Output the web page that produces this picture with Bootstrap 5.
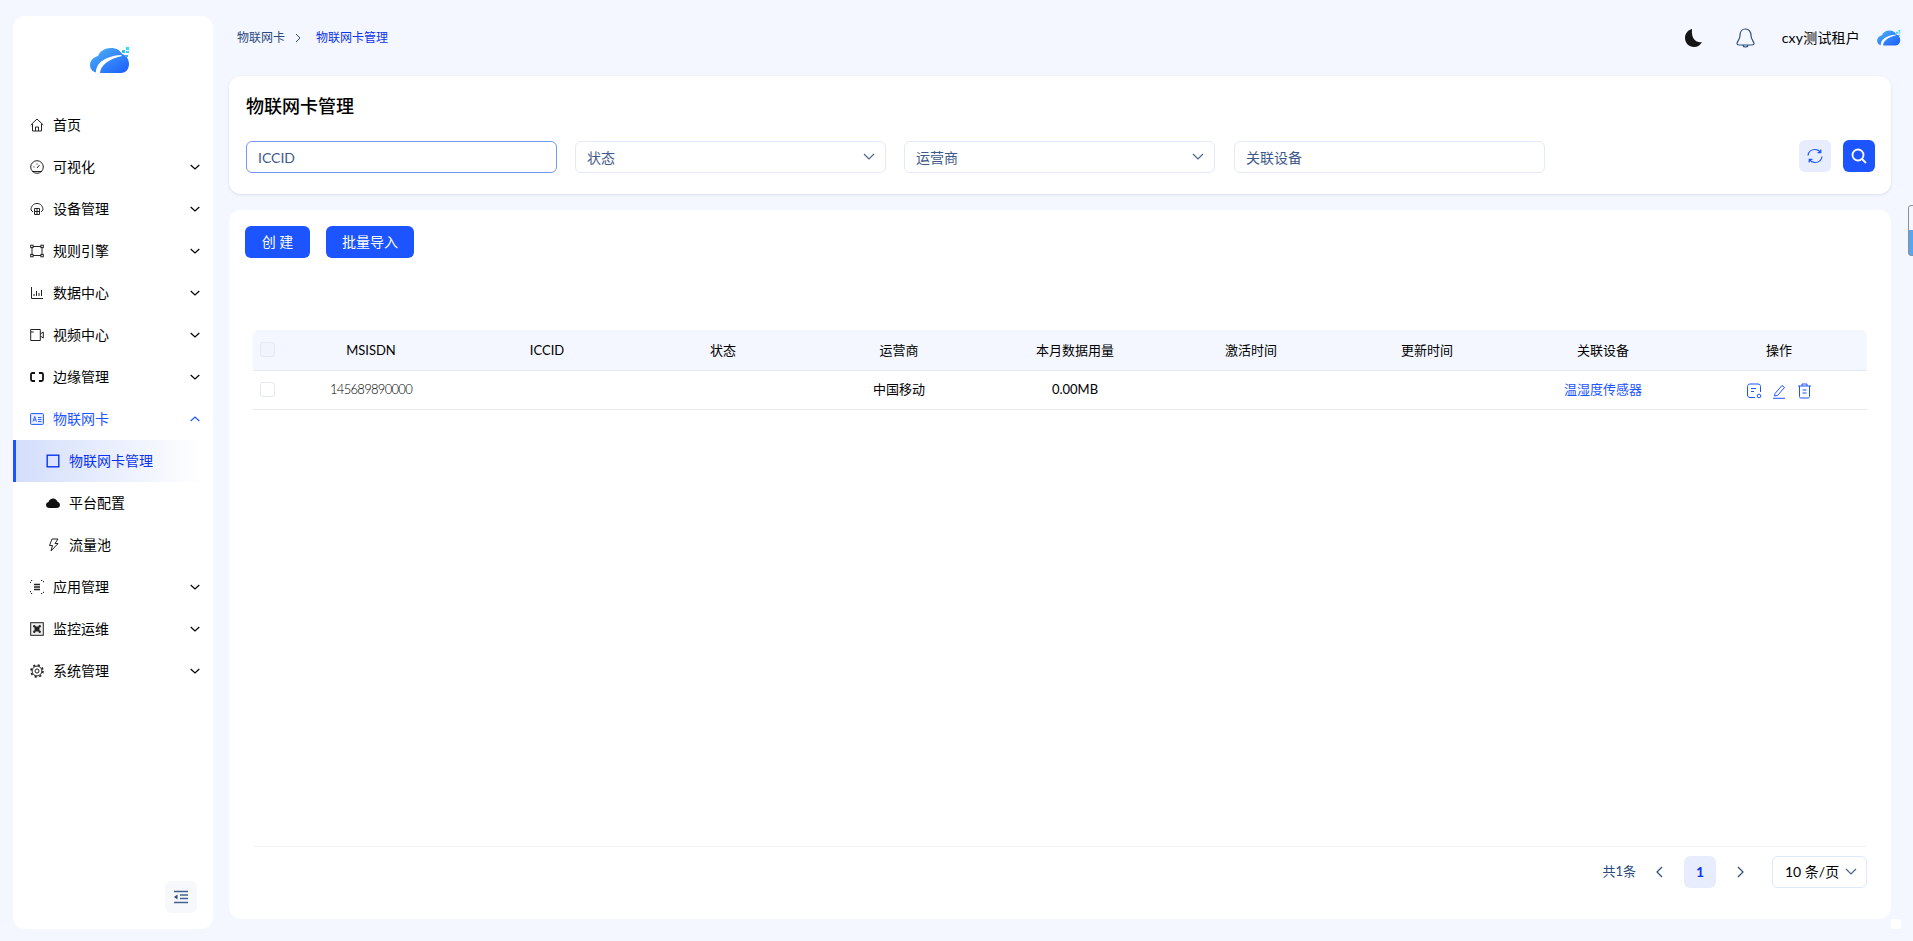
<!DOCTYPE html>
<html lang="zh-CN">
<head>
<meta charset="utf-8">
<title>物联网卡管理</title>
<link href="https://cdn.jsdelivr.net/npm/bootstrap@5.3.0/dist/css/bootstrap.min.css" rel="stylesheet">
<style>
html,body{height:100%;overflow:hidden}
body{background:#f4f7ff;font-family:"Lato","Noto Sans CJK SC",sans-serif;font-size:14px;color:#000;line-height:1.4}
.shell{height:941px}
.sidebar{width:200px;flex:none;margin:16px 0 12px 13px;background:#fff;border-radius:12px}
.brandbox{height:88px;padding:31px 6px 0 0}
.menu-row{height:42px;padding:0 13px 0 17px;color:#000;text-decoration:none}
.menu-row .ico{width:14px;height:14px;margin-right:9px;flex:none}
.menu-row .chev{width:10px;height:10px;margin-left:auto;flex:none}
.menu-row.open{color:#1c55ff}
.sub-row{height:42px;margin-right:10px;padding-left:30px;border-left:3px solid transparent;color:#000;text-decoration:none}
.sub-row .ico{width:14px;height:14px;margin-right:9px;flex:none}
.sub-row.current{border-left-color:#1c55ff;color:#0a32f0;background:linear-gradient(90deg,#d3defc,#fff)}
.collapse-btn{width:32px;height:32px;background:#f6f8fc;border-radius:6px;margin:0 16px 16px 0}
.content{margin:0 22px 22px 16px;min-width:0}
.topline{height:76px;padding:0 0 0 8px}
.crumb{font-size:12px;color:#2b4a7e}
.crumb .now{color:#0a32f0}
.crumb svg{width:8px;height:10px;margin:0 14px 0 9px}
.top-moon{width:17px;height:18px;margin-right:34px}
.top-bell{width:19px;height:21px;margin-right:27px}
.top-user{margin-right:17px;letter-spacing:.2px}
.top-logo{margin-right:-10px}
.panel{background:#fff;border-radius:12px}
.search-panel{height:118px;padding:18px 16px 0 17px;margin-bottom:16px;box-shadow:0 1px 3px rgba(60,80,130,.14)}
.page-title{font-size:18px;font-weight:500;color:#000;line-height:24px;margin:0 0 23px}
.filter-row{gap:18px}
.filter-row .form-control,.filter-row .form-select{width:311px;height:32px;flex:none;padding:0 11px;font-size:14px;color:#3f5a8a;border:1px solid #e2e9fb;border-radius:6px;box-shadow:none}
.filter-row .form-control::placeholder{color:#3f5a8a;opacity:1}
.filter-row .form-control.hot{border-color:#7596f3}
.filter-row .pick-wrap+.form-control{margin-left:1px}
.form-select,.size-pick{background-image:none}
.pick-wrap{position:relative;flex:none}
.pick-wrap svg{position:absolute;right:11px;top:11px;width:12px;height:10px;pointer-events:none}
.square-btn{width:32px;height:32px;padding:0;border:0;border-radius:6px;display:flex;align-items:center;justify-content:center}
.square-btn.soft{background:#e8edfd}
.square-btn.solid{background:#1c55ff}
.btn-pair{gap:12px;margin-top:-1px}
.list-panel{height:709px;padding:16px 24px 0 24px;position:relative}
.act-btn{height:32px;background:#1c55ff;border:0;border-radius:6px;color:#fff;font-size:14px;padding:0 16px;line-height:32px}
.act-btn.first{width:65px;margin-left:-8px;padding:0}
.data-table{table-layout:fixed;width:1614px;margin:72px 0 0 0;font-size:13px}
.data-table>thead>tr>th,.data-table>tbody>tr>td{padding:0;text-align:center;vertical-align:middle;color:#000;background:transparent;border-bottom:1px solid #e4e9f5;font-weight:400;box-shadow:none}
.data-table>thead>tr>th{height:40px;background:#f4f7ff}
.data-table>tbody>tr>td{height:39px}
.data-table thead th:first-child{border-top-left-radius:6px}
.data-table thead th:last-child{border-top-right-radius:6px}
.tick{display:block;width:15px;height:15px;margin:0 0 0 7px;border:1px solid #e2e8f8;border-radius:3px;background:#fff}
thead .tick{background:#f1f4fd}
.data-table>tbody>tr>td.num-cell{font-size:13px;font-weight:300;letter-spacing:-.7px}
.data-table .dev-link{color:#1c55ff;text-decoration:none}
.op-ico{width:15px;height:16px;margin:0 5px}
.pager-zone{position:absolute;left:24px;right:24px;top:636px;border-top:1px solid #f1f3f8;height:42px;padding-top:8px}
.pager-total{font-size:13px;color:#2b4a7e;margin-right:19px}
.pager-arrow{width:10px;height:12px}
.pager-cur{width:32px;height:32px;background:#e8edfd;border-radius:6px;color:#0a32f0;font-weight:700;margin:0 19px}
.size-pick{width:95px;height:32px;border:1px solid #dfe7fb;border-radius:6px;margin-left:27px;padding:0 9px 0 12px;color:#000;font-size:14px;background:#fff}
.size-pick svg{width:12px;height:10px;margin-left:auto}
.corner-chip{position:fixed;left:1891px;top:919px;width:10px;height:10px;background:#fff}
.edge-handle{position:fixed;left:1908px;top:205px;width:12px;height:51px;border:1px solid #8a8f99;border-radius:3px;background:linear-gradient(180deg,#f4f7ff 0 48%,#5aa5ee 48%)}
</style>
</head>
<body>
<svg width="0" height="0" class="position-absolute">
<defs>
<linearGradient id="cg" x1="0" y1="0" x2="1" y2="1"><stop offset="0" stop-color="#4cb4f4"/><stop offset="1" stop-color="#1c5cff"/></linearGradient>
<symbol id="logo" viewBox="0 0 40 27">
<path d="M10 26C4 26 0 23 0 18c0-5 4-8 8-9 2-5 7-8 13-8 5 0 9 2 11 6 4 1 7 5 7 10 0 5-3 9-8 9z" fill="url(#cg)"/>
<path d="M10 27c0-9 9-15 22-18l-1-1C17 9 5 15 6 27z" fill="#fff"/>
<rect x="32" y="3" width="3" height="3" fill="#29c8f5"/><rect x="36" y="0" width="3" height="3" fill="#1fe3f0"/><rect x="36" y="4" width="3" height="2" fill="#55c6f5"/><rect x="35" y="8" width="3" height="2" fill="#4aa8f5"/>
</symbol>
<symbol id="chev-down" viewBox="0 0 10 10"><path d="M.7 3 5 7l4.300-4" fill="none" stroke="currentColor" stroke-width="1.200"/></symbol>
</defs>
</svg>
<div class="shell d-flex">
<aside class="sidebar d-flex flex-column">
  <div class="brandbox d-flex justify-content-center"><svg width="40" height="27"><use href="#logo"/></svg></div>
  <nav class="d-flex flex-column">
    <a class="menu-row d-flex align-items-center" href="#"><svg class="ico" viewBox="0 0 14 14" fill="none" stroke="#222"><path d="M.7 7 7 1l6.300 6M2.500 6v7h9V6M5.500 13V9h3v4"/></svg>首页</a>
    <a class="menu-row d-flex align-items-center" href="#"><svg class="ico" viewBox="0 0 14 14" fill="none" stroke="#222"><circle cx="7" cy="7" r="6.300"/><path d="M2 11.500h10M7 8l2.500-3M3.500 7h1M7 3.500v1"/></svg>可视化<svg class="chev"><use href="#chev-down"/></svg></a>
    <a class="menu-row d-flex align-items-center" href="#"><svg class="ico" viewBox="0 0 14 14" fill="none" stroke="#222"><path d="M1 8c0-4 2.500-6.500 6-6.500S13 4 13 8M1 8l2 2M13 8l-2 2M4.500 6.500h5v6h-5zM4.500 9.500h5M7 6.500v6"/></svg>设备管理<svg class="chev"><use href="#chev-down"/></svg></a>
    <a class="menu-row d-flex align-items-center" href="#"><svg class="ico" viewBox="0 0 14 14" fill="none" stroke="#222"><path d="M3 2.500h8M3 11.500h8M2 3.500v7M12 3.500v7"/><rect x=".7" y="1.200" width="2.400" height="2.400"/><rect x="10.900" y="1.200" width="2.400" height="2.400"/><rect x=".7" y="10.400" width="2.400" height="2.400"/><rect x="10.900" y="10.400" width="2.400" height="2.400"/></svg>规则引擎<svg class="chev"><use href="#chev-down"/></svg></a>
    <a class="menu-row d-flex align-items-center" href="#"><svg class="ico" viewBox="0 0 14 14" fill="none" stroke="#222"><path d="M1.500 1v11.500H13M4 10V8M6.500 10V5M9 10V7M11.500 10V4"/></svg>数据中心<svg class="chev"><use href="#chev-down"/></svg></a>
    <a class="menu-row d-flex align-items-center" href="#"><svg class="ico" viewBox="0 0 14 14" fill="none" stroke="#222"><path d="M.7 1.500h9.600v11H.7zM10.300 6 13.300 4v6l-3-2M.7 4h3"/></svg>视频中心<svg class="chev"><use href="#chev-down"/></svg></a>
    <a class="menu-row d-flex align-items-center" href="#"><svg class="ico" viewBox="0 0 14 14" fill="none" stroke="#111" stroke-width="1.800"><path d="M5 3H2.500C1.500 3 1 3.500 1 4.500v5c0 1 .5 1.500 1.500 1.500H5M9 3h2.500c1 0 1.500.5 1.500 1.500v5c0 1-.5 1.500-1.500 1.500H9"/></svg>边缘管理<svg class="chev"><use href="#chev-down"/></svg></a>
    <a class="menu-row open d-flex align-items-center" href="#"><svg class="ico" viewBox="0 0 14 14" fill="none" stroke="#1c55ff"><rect x=".6" y="1.600" width="12.800" height="10.800" rx=".8" fill="#eaf0ff"/><path d="M3 9.500 4.700 4.500l1.700 5M3.700 8h2M8 5.500h3.500M8 7.500h3.500M8 9.500h3.500" stroke-width=".9"/></svg>物联网卡<svg class="chev" style="transform:rotate(180deg)"><use href="#chev-down"/></svg></a>
    <a class="sub-row current d-flex align-items-center" href="#"><svg class="ico" viewBox="0 0 14 14" fill="none" stroke="#0a32f0" stroke-width="1.400"><rect x="1.200" y="1.200" width="11.600" height="11.600"/></svg>物联网卡管理</a>
    <a class="sub-row d-flex align-items-center" href="#"><svg class="ico" viewBox="0 0 14 14" fill="#111"><path d="M3.500 12C1.500 12 0 10.700 0 9c0-1.500 1-2.700 2.500-3C3 4 5 2.500 7.200 2.500c2 0 3.700 1.300 4.300 3.300 1.500.4 2.500 1.700 2.500 3.200 0 1.700-1.500 3-3.500 3z"/></svg>平台配置</a>
    <a class="sub-row d-flex align-items-center" href="#"><svg class="ico" viewBox="0 0 14 14" fill="none" stroke="#222"><path d="M6 1h6L9 5.500h3L5 13l1.500-5.500H3.500z"/></svg>流量池</a>
    <a class="menu-row d-flex align-items-center" href="#"><svg class="ico" viewBox="0 0 14 14" fill="none" stroke="#222"><path d="M.5 3V.5H3M11 .5h2.500V3M.5 11v2.500H3M11 13.500h2.500V11" stroke-dasharray="1.200 1.800"/><path d="M4 4.500h6M4 7h6M4 9.500h6" stroke-width="1.500"/></svg>应用管理<svg class="chev"><use href="#chev-down"/></svg></a>
    <a class="menu-row d-flex align-items-center" href="#"><svg class="ico" viewBox="0 0 14 14" fill="none" stroke="#222"><rect x=".7" y=".7" width="12.600" height="12.600" fill="#eee"/><path d="M5 5h4v4H5z" fill="#222"/><circle cx="4.300" cy="4.300" r="1.200" fill="#222" stroke="none"/><circle cx="9.700" cy="4.300" r="1.200" fill="#222" stroke="none"/><circle cx="4.300" cy="9.700" r="1.200" fill="#222" stroke="none"/><circle cx="9.700" cy="9.700" r="1.200" fill="#222" stroke="none"/></svg>监控运维<svg class="chev"><use href="#chev-down"/></svg></a>
    <a class="menu-row d-flex align-items-center" href="#"><svg class="ico" viewBox="0 0 14 14" fill="none" stroke="#222"><circle cx="7" cy="7" r="4.900"/><circle cx="7" cy="7" r="6" stroke-width="1.600" stroke-dasharray="2.200 2.510"/><circle cx="7" cy="7" r="2"/></svg>系统管理<svg class="chev"><use href="#chev-down"/></svg></a>
  </nav>
  <button class="collapse-btn btn p-0 mt-auto align-self-end d-flex align-items-center justify-content-center" aria-label="收起">
    <svg width="14" height="14" viewBox="0 0 14 14" fill="none" stroke="#44608f" stroke-width="1.500"><path d="M0 1.500h14M6 5h8M6 8.500h8M0 12.500h14"/><path d="M3.500 4.500v5L0 7z" fill="#2c4a80" stroke="none"/></svg>
  </button>
</aside>
<main class="content flex-grow-1 d-flex flex-column">
  <header class="topline d-flex align-items-center">
    <div class="crumb d-flex align-items-center"><span>物联网卡</span><svg viewBox="0 0 8 10" fill="none" stroke="#2b4a7e"><path d="m2 1 4 4-4 4"/></svg><span class="now">物联网卡管理</span></div>
    <div class="ms-auto d-flex align-items-center">
      <svg class="top-moon" viewBox="0 0 17 18"><path d="M7 0C3 1 0 4.500 0 9c0 5 4 9 9 9 3.500 0 6.500-2 8-5-5 1-11-2-10-13z" fill="#151515"/></svg>
      <svg class="top-bell" viewBox="0 0 19 21" fill="none" stroke="#2f4f86" stroke-width="1.200"><path d="M9.500 1C6 1 4 4 4 7.500c0 4-3 6-3 8 0 1 1 1.500 2 1.500h13c1 0 2-.5 2-1.500 0-2-3-4-3-8C15 4 13 1 9.500 1zM7 17.500c.5 2 4.500 2 5 0"/></svg>
      <span class="top-user">cxy测试租户</span>
      <svg class="top-logo" width="24" height="16"><use href="#logo"/></svg>
    </div>
  </header>
  <section class="panel search-panel">
    <h1 class="page-title">物联网卡管理</h1>
    <div class="filter-row d-flex align-items-center">
      <input class="form-control hot" placeholder="ICCID" aria-label="ICCID">
      <div class="pick-wrap"><select class="form-select" aria-label="状态"><option>状态</option></select><svg viewBox="0 0 12 10" fill="none" stroke="#4a638f" stroke-width="1.200"><path d="m1 2 5 5 5-5"/></svg></div>
      <div class="pick-wrap"><select class="form-select" aria-label="运营商"><option>运营商</option></select><svg viewBox="0 0 12 10" fill="none" stroke="#4a638f" stroke-width="1.200"><path d="m1 2 5 5 5-5"/></svg></div>
      <input class="form-control" placeholder="关联设备" aria-label="关联设备">
      <div class="btn-pair ms-auto d-flex align-self-start">
        <button class="square-btn soft" aria-label="刷新"><svg width="16" height="16" viewBox="0 0 16 16" fill="none" stroke="#1c55ff" stroke-width="1.200"><path d="M1 7.500C1.500 4 4.300 1.500 8 1.500c2.300 0 4.300 1 5.500 3M15 8.500c-.5 3.500-3.300 6-7 6-2.300 0-4.300-1-5.500-3M13.800 1.500v3.200h-3.200M2.200 14.500v-3.200h3.200"/></svg></button>
        <button class="square-btn solid" aria-label="搜索"><svg width="16" height="16" viewBox="0 0 16 16" fill="none" stroke="#fff" stroke-width="1.800"><circle cx="7" cy="7" r="5.500"/><path d="m11 11 4 4"/></svg></button>
      </div>
    </div>
  </section>
  <section class="panel list-panel">
    <div class="d-flex" style="gap:16px"><button class="act-btn first">创&nbsp;建</button><button class="act-btn">批量导入</button></div>
    <table class="table data-table">
      <colgroup><col style="width:30px"><col span="9"></colgroup>
      <thead><tr><th><span class="tick"></span></th><th>MSISDN</th><th>ICCID</th><th>状态</th><th>运营商</th><th>本月数据用量</th><th>激活时间</th><th>更新时间</th><th>关联设备</th><th>操作</th></tr></thead>
      <tbody><tr><td><span class="tick"></span></td><td class="num-cell">145689890000</td><td></td><td></td><td>中国移动</td><td>0.00MB</td><td></td><td></td><td><a class="dev-link" href="#">温湿度传感器</a></td>
      <td>
        <svg class="op-ico" viewBox="0 0 15 16" fill="none" stroke="#1c55ff"><path d="M8 14.500H3c-1.500 0-2.500-1-2.500-2.500V3.500C.5 2 1.500 1 3 1h8c1.500 0 2.500 1 2.500 2.500V9M4 5.500h5M4 8.500h3"/><circle cx="12" cy="13" r="1.800"/></svg><svg class="op-ico" viewBox="0 0 15 16" fill="none" stroke="#1c55ff"><path d="M3 10.500 10 2.500l2.500 2-7 8-3 .5zM1 15.300h12"/></svg><svg class="op-ico" viewBox="0 0 15 16" fill="none" stroke="#1c55ff"><path d="M1 3h13M5 3V1h5v2M2.500 3v10.500c0 1 .5 1.500 1.500 1.500h7c1 0 1.500-.5 1.500-1.500V3M5.500 7h4M5.500 10h4"/></svg>
      </td></tr></tbody>
    </table>
    <div class="pager-zone d-flex align-items-center justify-content-end">
      <span class="pager-total">共1条</span>
      <svg class="pager-arrow" viewBox="0 0 10 12" fill="none" stroke="#2b4a7e" stroke-width="1.200"><path d="M7 1 2 6l5 5"/></svg>
      <span class="pager-cur d-flex align-items-center justify-content-center">1</span>
      <svg class="pager-arrow" viewBox="0 0 10 12" fill="none" stroke="#2b4a7e" stroke-width="1.200"><path d="m3 1 5 5-5 5"/></svg>
      <div class="size-pick d-flex align-items-center"><span>10 条/页</span><svg viewBox="0 0 12 10" fill="none" stroke="#4a638f" stroke-width="1.200"><path d="m1 2 5 5 5-5"/></svg></div>
    </div>
  </section>
</main>
</div>
<div class="corner-chip"></div>
<div class="edge-handle"></div>
<script src="https://cdn.jsdelivr.net/npm/bootstrap@5.3.0/dist/js/bootstrap.bundle.min.js"></script>
</body>
</html>
